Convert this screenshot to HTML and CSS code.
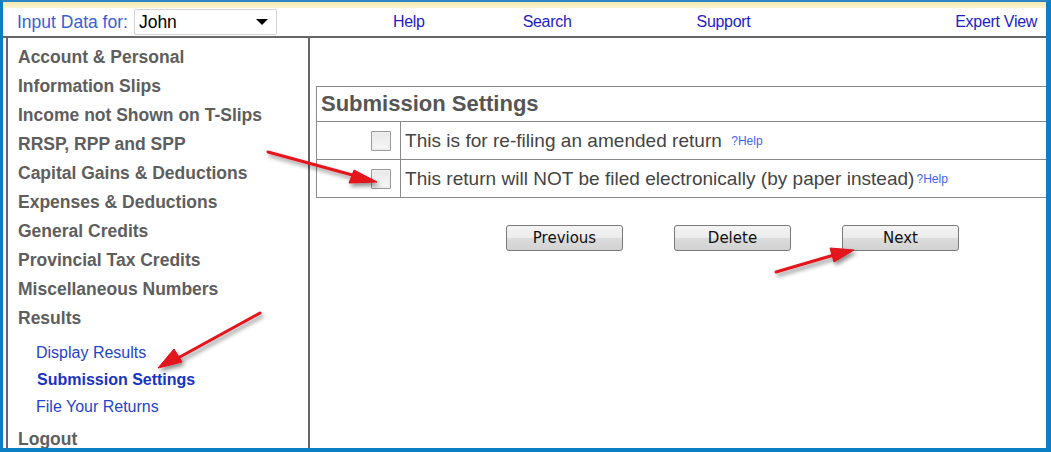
FILE: index.html
```html
<!DOCTYPE html>
<html lang="en">
<head>
    <meta charset="UTF-8">
    <title>Submission Settings</title>
    <link rel="stylesheet" href="styles.css">
</head>
<body>
    <div class="frame">
        <div class="strip"></div>

        <div class="topbar">
            <span class="input-label">Input Data for:</span>
            <div class="person-select">
                <span>John</span>
                <span class="caret"></span>
            </div>
            <a class="toplink link-help" href="#">Help</a>
            <a class="toplink link-search" href="#">Search</a>
            <a class="toplink link-support" href="#">Support</a>
            <a class="toplink link-expert" href="#">Expert View</a>
        </div>

        <div class="body">
            <div class="sidebar">
                <a class="nav-item" href="#">Account &amp; Personal</a>
                <a class="nav-item" href="#">Information Slips</a>
                <a class="nav-item" href="#">Income not Shown on T-Slips</a>
                <a class="nav-item" href="#">RRSP, RPP and SPP</a>
                <a class="nav-item" href="#">Capital Gains &amp; Deductions</a>
                <a class="nav-item" href="#">Expenses &amp; Deductions</a>
                <a class="nav-item" href="#">General Credits</a>
                <a class="nav-item" href="#">Provincial Tax Credits</a>
                <a class="nav-item" href="#">Miscellaneous Numbers</a>
                <a class="nav-item" href="#">Results</a>
                <div class="sub-nav">
                    <a class="sub-item" href="#">Display Results</a>
                    <a class="sub-item active" href="#">Submission Settings</a>
                    <a class="sub-item" href="#">File Your Returns</a>
                </div>
                <a class="nav-item" href="#">Logout</a>
            </div>

            <div class="main">
                <table class="settings">
                    <tr>
                        <th colspan="2">Submission Settings</th>
                    </tr>
                    <tr>
                        <td class="check-cell"><input type="checkbox"></td>
                        <td class="label-cell">This is for re-filing an amended return <a class="help gap" href="#">?Help</a></td>
                    </tr>
                    <tr>
                        <td class="check-cell"><input type="checkbox"></td>
                        <td class="label-cell">This return will NOT be filed electronically (by paper instead)<a class="help" href="#">?Help</a></td>
                    </tr>
                </table>

                <div class="actions">
                    <button>Previous</button>
                    <button>Delete</button>
                    <button>Next</button>
                </div>
            </div>
        </div>

        <!-- annotation arrows drawn over the screenshot -->
        <svg class="arrows" width="1051" height="452" viewBox="0 0 1051 452">
            <defs>
                <filter id="shadow" x="-20%" y="-50%" width="140%" height="200%">
                    <feDropShadow dx="2" dy="3" stdDeviation="2" flood-color="#000" flood-opacity="0.45"/>
                </filter>
            </defs>
            <g fill="#e3121b" stroke="#e3121b" filter="url(#shadow)">
                <line x1="268" y1="152" x2="356" y2="176" stroke-width="3" stroke-linecap="round"/>
                <polygon points="377,182 349,183 354,170" stroke-width="1"/>

                <line x1="260" y1="313" x2="178" y2="358" stroke-width="3" stroke-linecap="round"/>
                <polygon points="158,368 174,349 182,362" stroke-width="1"/>

                <line x1="776" y1="272" x2="834" y2="255" stroke-width="3" stroke-linecap="round"/>
                <polygon points="854,250 830,248 834,262" stroke-width="1"/>
            </g>
        </svg>
    </div>
</body>
</html>
```

FILE: styles.css
```css
body {
    margin: 0;
    padding: 0;
    background: #fff;
    font-family: "Liberation Sans", Arial, sans-serif;
}

.frame {
    position: relative;
    width: 1051px;
    height: 452px;
    box-sizing: border-box;
    border-top: 2px solid #2b86c9;
    border-left: 3px solid #0a7fc4;
    border-right: 5px solid #0a7fc4;
    border-bottom: 4px solid #0a7fc4;
    overflow: hidden;
    display: flex;
    flex-direction: column;
}

.strip {
    height: 6px;
    background: linear-gradient(#f3eab0, #fbf5d2);
}

.topbar {
    height: 28px;
    display: flex;
    align-items: center;
    border-bottom: 2px solid #666;
}

.input-label {
    margin-left: 14px;
    font-size: 17.5px;
    color: #3a5ed6;
}

.person-select {
    margin-left: 6px;
    width: 143px;
    height: 26px;
    border: 1px solid #d4d4d4;
    border-radius: 2px;
    display: flex;
    align-items: center;
    justify-content: space-between;
    padding: 0 8px 0 4px;
    box-sizing: border-box;
    font-size: 17.5px;
    color: #000;
}

.caret {
    width: 0;
    height: 0;
    border-left: 6px solid transparent;
    border-right: 6px solid transparent;
    border-top: 6px solid #000;
}

.toplink {
    font-size: 16px;
    color: #1d1dc8;
    text-decoration: none;
    letter-spacing: -0.3px;
}

.link-help { margin-left: 116px; }
.link-search { margin-left: 98px; }
.link-support { margin-left: 125px; }
.link-expert { margin-left: auto; margin-right: 9px; }

.body {
    flex: 1;
    display: flex;
    min-height: 0;
}

.sidebar {
    width: 304px;
    box-sizing: border-box;
    margin-left: 3px;
    border-left: 2px solid #666;
    border-right: 2px solid #666;
    padding: 5px 0 0 10px;
    display: flex;
    flex-direction: column;
    overflow: hidden;
}

.nav-item {
    font-size: 17.5px;
    font-weight: bold;
    color: #5e5e5e;
    line-height: 29px;
    text-decoration: none;
    white-space: nowrap;
}

.sub-nav {
    display: flex;
    flex-direction: column;
    padding: 6px 0 5px 18px;
}

.sub-item {
    font-size: 16px;
    line-height: 27px;
    color: #1f44cc;
    text-decoration: none;
}

.sub-item.active {
    font-weight: bold;
    color: #1634c4;
    margin-left: 1px;
}

.main {
    flex: 1;
    padding: 48px 0 0 6px;
}

.settings {
    width: 100%;
    border-collapse: collapse;
    border: 1px solid #8a8a8a;
    border-right: none;
    color: #444;
}

.settings th {
    text-align: left;
    height: 34px;
    padding: 0 0 0 4px;
    font-size: 22px;
    color: #555;
    border-bottom: 1px solid #8a8a8a;
}

.settings td {
    height: 37px;
    padding: 0;
    border-bottom: 1px solid #8a8a8a;
}

.check-cell {
    width: 74px;
    text-align: right;
    padding-right: 9px !important;
    border-right: 1px solid #8a8a8a;
}

.check-cell input {
    appearance: none;
    -webkit-appearance: none;
    width: 20px;
    height: 20px;
    margin: 4px 0 0 0;
    border: 1px solid #9a9a9a;
    border-radius: 1px;
    background: linear-gradient(#e6e6e6, #f8f8f8);
    box-shadow: inset 0 0 0 2px #eeeeee;
}

.label-cell {
    padding-left: 4px !important;
    font-size: 19px;
    letter-spacing: 0.03px;
    white-space: nowrap;
}

.help {
    font-size: 12px;
    color: #3a66f0;
    text-decoration: none;
    vertical-align: 2px;
    margin-left: 2px;
    letter-spacing: 0;
}

.help.gap {
    margin-left: 4px;
}

.actions {
    display: flex;
    gap: 51px;
    padding: 27px 0 0 190px;
}

.actions button {
    width: 117px;
    height: 26px;
    font-family: "DejaVu Sans", Tahoma, sans-serif;
    font-size: 15px;
    color: #111;
    border: 1px solid #7a7a7a;
    border-radius: 3px;
    background: linear-gradient(#f4f4f4 0%, #ebebeb 50%, #dcdcdc 51%, #d2d2d2 100%);
    padding: 0;
    cursor: pointer;
}

.arrows {
    position: absolute;
    left: -3px;
    top: -2px;
    pointer-events: none;
}
```
